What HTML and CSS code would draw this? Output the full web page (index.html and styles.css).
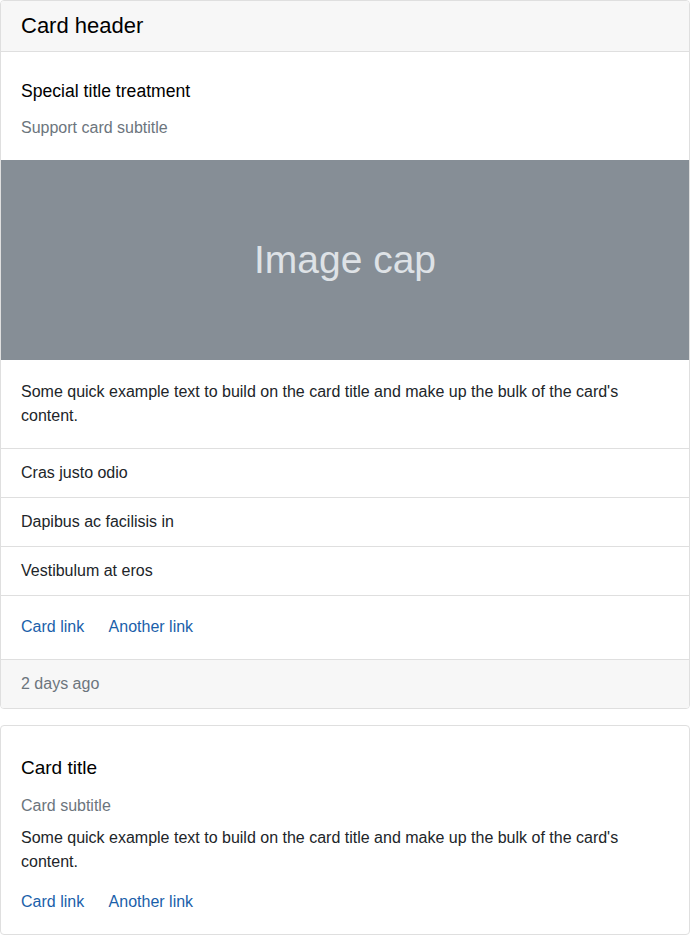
FILE: index.html
```html
<!DOCTYPE html>
<html lang="en">
<head>
<meta charset="utf-8">
<title>Cards</title>
<link rel="stylesheet" href="styles.css">
</head>
<body>
<div class="stack">
  <div class="card">
    <div class="card-header">Card header</div>
    <div class="card-body">
      <h5 class="card-title">Special title treatment</h5>
      <h6 class="card-subtitle card-subtitle-end">Support card subtitle</h6>
    </div>
    <div class="image-cap">Image cap</div>
    <div class="card-body">
      <p class="card-text card-text-end">Some quick example text to build on the card title and make up the bulk of the card's content.</p>
    </div>
    <ul class="list-group">
      <li class="list-item">Cras justo odio</li>
      <li class="list-item">Dapibus ac facilisis in</li>
      <li class="list-item">Vestibulum at eros</li>
    </ul>
    <div class="card-body card-body-links">
      <a href="#" class="card-link">Card link</a>
      <a href="#" class="card-link">Another link</a>
    </div>
    <div class="card-footer">2 days ago</div>
  </div>

  <div class="card">
    <div class="card-body">
      <h5 class="card-title card-title-alt">Card title</h5>
      <h6 class="card-subtitle">Card subtitle</h6>
      <p class="card-text">Some quick example text to build on the card title and make up the bulk of the card's content.</p>
      <a href="#" class="card-link">Card link</a>
      <a href="#" class="card-link">Another link</a>
    </div>
  </div>
</div>
</body>
</html>
```

FILE: styles.css
```css
* { box-sizing: border-box; }

html, body {
  margin: 0;
  padding: 0;
  background: #fff;
}

body {
  font-family: "Liberation Sans", Arial, sans-serif;
  font-size: 16px;
  line-height: 24px;
  color: #212529;
}

.stack {
  display: flex;
  flex-direction: column;
  gap: 16px;
}

.card {
  display: flex;
  flex-direction: column;
  border: 1px solid #dfdfdf;
  border-radius: 4px;
  overflow: hidden;
  background: #fff;
}

.card-header {
  padding: 12px 20px;
  font-size: 22px;
  line-height: 26px;
  color: #000;
  background: #f7f7f7;
  border-bottom: 1px solid #dfdfdf;
}

.card-body {
  padding: 20px;
}

.card-body-links {
  padding: 19px 20px 20px;
}

.card-title {
  margin: 8px 0 14px;
  font-size: 17.6px;
  line-height: 22px;
  font-weight: 400;
  color: #000;
}

.card-title-alt {
  margin-top: 10px;
  margin-bottom: 15px;
  font-size: 19px;
  line-height: 23px;
}

.card-subtitle {
  margin: 0 0 8px;
  font-size: 16px;
  line-height: 24px;
  font-weight: 400;
  color: #6c757d;
}

.card-subtitle-end { margin-bottom: 0; }

.card-text {
  margin: 0 0 16px;
}

.card-text-end { margin-bottom: 0; }

.image-cap {
  height: 200px;
  display: flex;
  align-items: center;
  justify-content: center;
  padding-bottom: 2px;
  background: #868e96;
  color: #dee2e6;
  font-size: 39px;
  line-height: 1;
}

.list-group {
  list-style: none;
  margin: 0;
  padding: 0;
  border-top: 1px solid #dfdfdf;
}

.list-item {
  padding: 12px 20px;
  border-bottom: 1px solid #dfdfdf;
}

.card-link {
  color: #1b5faa;
  text-decoration: none;
}

.card-link + .card-link {
  margin-left: 20px;
}

.card-footer {
  padding: 12px 20px;
  color: #6c757d;
  background: #f7f7f7;
  border-top: 1px solid #dfdfdf;
}
```
